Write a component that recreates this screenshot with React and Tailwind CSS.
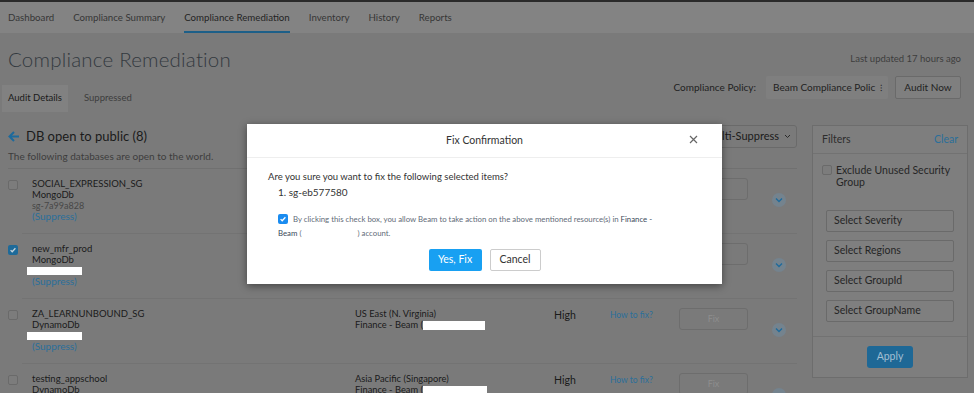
import React from "react";

function Check({ checked, modal }) {
  return checked ? (
    <div className={"w-[10px] h-[10px] rounded-[2px] flex items-center justify-center " + (modal ? "bg-[#1a8cf0]" : "bg-[#1e6a99]")}>
      <svg width="8" height="8" viewBox="0 0 10 10"><path d="M2 5.2l2 2 4-4.4" stroke={modal ? "#fff" : "#c8d4dc"} strokeWidth="1.6" fill="none" /></svg>
    </div>
  ) : (
    <div className="w-[10px] h-[10px] rounded-[2px] border border-[#6a6a6a] bg-[#7c7c7c]" />
  );
}

function Redact({ w, h }) {
  return <span className="inline-block bg-white align-middle" style={{ width: w, height: h }} />;
}

function Chevron() {
  return (
    <div className="w-[14px] h-[14px] rounded-full bg-[#74838e] flex items-center justify-center">
      <svg width="8" height="6" viewBox="0 0 8 6"><path d="M1 1.5l3 3 3-3" stroke="#1d6a9c" strokeWidth="1.3" fill="none" /></svg>
    </div>
  );
}

const rows = [
  { name: "SOCIAL_EXPRESSION_SG", type: "MongoDb", id: "sg-7a99a828", region: "US East (N. Virginia)", checked: false },
  { name: "new_mfr_prod", type: "MongoDb", redact: true, region: "US East (N. Virginia)", checked: true },
  { name: "ZA_LEARNUNBOUND_SG", type: "DynamoDb", redact: true, region: "US East (N. Virginia)", checked: false, acctRedact: 62 },
  { name: "testing_appschool", type: "DynamoDb", region: "Asia Pacific (Singapore)", checked: false, acctRedact: 64 },
];

export default function App() {
  return (
    <div className="relative w-[974px] h-[393px] overflow-hidden bg-[#7a7a7a] text-[#1a1a1a]" style={{ fontFamily: "Lato, 'Open Sans', sans-serif" }}>
      {/* nav */}
      <div className="h-[33px] bg-[#838383] border-t-2 border-[#2a2a2a] flex items-stretch pl-[8px] gap-[19px] text-[9.7px] text-[#363636]">
        {["Dashboard", "Compliance Summary", "Compliance Remediation", "Inventory", "History", "Reports"].map((t) => (
          <div key={t} className={"flex items-center pt-[2px] " + (t === "Compliance Remediation" ? "border-b-2 border-[#1d5f88] text-[#242424]" : "border-b-2 border-transparent")}>{t}</div>
        ))}
      </div>

      {/* header */}
      <div className="flex justify-between pl-[8px] pr-[13px]">
        <div className="flex flex-col">
          <div className="h-[42px] flex items-end text-[20.5px] font-light text-[#33393f] tracking-[0.2px]">Compliance Remediation</div>
          <div className="flex mt-[10px] h-[27px] -ml-[6px] text-[9.5px]">
            <div className="bg-[#818181] px-[6px] flex items-center text-[#1a1a1a]">Audit Details</div>
            <div className="px-[16px] flex items-center text-[#3d3d3d]">Suppressed</div>
          </div>
        </div>
        <div className="flex flex-col items-end">
          <div className="h-[20px] mt-[16px] mb-[7px] flex items-center text-[9.5px] text-[#3d3d3d]">Last updated 17 hours ago</div>
          <div className="flex items-center gap-[7px] text-[10px]">
            <span className="text-[#222] mr-[3px] whitespace-nowrap">Compliance Policy:</span>
            <div className="w-[122px] h-[23px] bg-[#7f7f7f] rounded-[2px] flex items-center justify-between pl-[7px] pr-[6px] text-[#222] whitespace-nowrap">
              <span>Beam Compliance Polic</span>
              <span className="text-[9px] leading-none">⁝</span>
            </div>
            <div className="h-[23px] w-[66px] border border-[#6a6a6a] rounded-[2px] bg-[#7f7f7f] flex items-center justify-center text-[#222]">Audit Now</div>
          </div>
        </div>
      </div>

      {/* main */}
      <div className="flex mt-[13px] pl-[8px] pr-[6px] gap-[15px]">
        <div className="w-[789px] flex flex-col">
          <div className="flex items-center justify-between h-[23px]">
            <div className="flex items-center gap-[6px] text-[13px] text-[#1a1a1a]">
              <svg width="12" height="11" viewBox="0 0 12 11"><path d="M11 5.5H2M6 1L1.5 5.5 6 10" stroke="#1d6a9c" strokeWidth="2" fill="none" /></svg>
              <span>DB open to public (8)</span>
            </div>
            <div className="h-[23px] pl-[8px] pr-[5px] border border-[#6a6a6a] rounded-[3px] flex items-center gap-[5px] text-[11px] text-[#1a1a1a]">
              <span>Multi-Suppress</span>
              <svg width="7" height="5" viewBox="0 0 7 5"><path d="M1 1l2.5 2.5L6 1" stroke="#2a2a2a" strokeWidth="1" fill="none" /></svg>
            </div>
          </div>
          <div className="text-[10px] text-[#3d3d3d] mt-[1px] pb-[4px] border-b border-[#707070]">The following databases are open to the world.</div>
          {rows.map((r, i) => (
            <div key={i} className="flex h-[65px]">
              <div className="w-[14px] pt-[11px]"><Check checked={r.checked} /></div>
              <div className={"flex-1 flex pl-[10px] pt-[9px] " + (i < 3 ? "border-b border-[#737373]" : "")}>
                <div className="w-[323px] flex flex-col text-[9.5px] leading-[11px] text-[#1a1a1a]">
                  <span>{r.name}</span>
                  <span>{r.type}</span>
                  {r.id ? <span className="text-[9px] text-[#474747]">{r.id}</span> : r.redact ? <span className="h-[11px] flex items-center -ml-[5px]"><Redact w={55} h={8} /></span> : null}
                  {(r.id || r.redact) && <span className="text-[#2a6f9a] text-[10px]">(Suppress)</span>}
                </div>
                <div className="w-[199px] flex flex-col text-[9.3px] leading-[11px] text-[#1a1a1a]">
                  <span>{r.region}</span>
                  <span className="whitespace-nowrap">Finance - Beam ({r.acctRedact ? <Redact w={r.acctRedact} h={9} /> : null}</span>
                </div>
                <div className="w-[56px] text-[10.5px] text-[#1a1a1a]">High</div>
                <div className="w-[69px] text-[8.5px] text-[#2a6f9a] pt-[1px]">How to fix?</div>
                <div className="w-[69px] h-[22px] border border-[#6d6d6d] rounded-[3px] flex items-center justify-center text-[9px] text-[#8e8e8e]">Fix</div>
                <div className="ml-[24px] mt-[15px]"><Chevron /></div>
              </div>
            </div>
          ))}
        </div>

        {/* filter */}
        <div className="w-[156px] h-[253px] border border-[#6d6d6d] bg-[#7e7e7e] flex flex-col">
          <div className="h-[28px] border-b border-[#727272] flex items-center justify-between px-[9px] text-[10.5px]">
            <span className="text-[#2d2d2d]">Filters</span>
            <span className="text-[#2a6f9a]">Clear</span>
          </div>
          <div className="flex gap-[4px] px-[9px] pt-[10px] text-[10.5px] leading-[12px] text-[#262626]">
            <div className="pt-[1px]"><Check /></div>
            <span>Exclude Unused Security Group</span>
          </div>
          <div className="flex flex-col gap-[8px] px-[13px] mt-[22px]">
            {["Select Severity", "Select Regions", "Select GroupId", "Select GroupName"].map((s) => (
              <div key={s} className="h-[22px] border border-[#6a6a6a] rounded-[2px] bg-[#7f7f7f] flex items-center px-[7px] text-[10.5px] text-[#262626]">{s}</div>
            ))}
          </div>
          <div className="mt-[14px] border-t border-[#727272] flex justify-center pt-[9px]">
            <div className="w-[46px] h-[22px] rounded-[3px] bg-[#1e6896] flex items-center justify-center text-[10.5px] text-[#a3bfd2]">Apply</div>
          </div>
        </div>
      </div>

      {/* modal */}
      <div className="absolute left-[247px] top-[124px] w-[475px] h-[160px] bg-white shadow-[0_2px_8px_rgba(0,0,0,0.45)] flex flex-col">
        <div className="h-[34px] border-b border-[#eee] relative flex items-center justify-center text-[10.5px] text-[#333]">
          Fix Confirmation
          <svg className="absolute right-[24px] top-[11px]" width="9" height="9" viewBox="0 0 9 9"><path d="M1 1l7 7M8 1L1 8" stroke="#666" strokeWidth="1.2" /></svg>
        </div>
        <div className="pl-[21px] pt-[12px] text-[9.5px] text-[#333] leading-[13px]">Are you sure you want to fix the following selected items?</div>
        <div className="pl-[31px] pt-[2px] text-[10px] text-[#333]">1. sg-eb577580</div>
        <div className="pl-[31px] pt-[12px] pr-[56px] text-[7.8px] leading-[14px] text-[#5f6b78]">
          <span className="inline-flex align-[-1px] mr-[5px]"><Check checked modal /></span>
          By clicking this check box, you allow Beam to take action on the above mentioned resource(s) in <span className="text-[#3a4a5a]">Finance -</span> <span className="text-[#3a4a5a]">Beam</span> (<span className="inline-block w-[56px]" />) account.
        </div>
        <div className="flex justify-center gap-[8px] mt-[9px]">
          <div className="w-[53px] h-[22px] rounded-[2px] bg-[#18a0f2] text-white text-[10.5px] flex items-center justify-center">Yes, Fix</div>
          <div className="w-[51px] h-[22px] rounded-[2px] border border-[#ccc] text-[#333] text-[10.5px] flex items-center justify-center">Cancel</div>
        </div>
      </div>
    </div>
  );
}
